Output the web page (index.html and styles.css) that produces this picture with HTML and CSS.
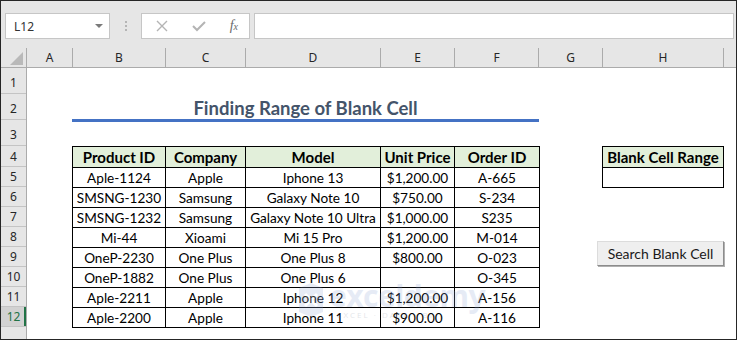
FILE: index.html
```html
<!DOCTYPE html>
<html lang="en">
<head>
    <meta charset="UTF-8">
    <meta name="viewport" content="width=device-width, initial-scale=1.0">
    <title>Finding Range of Blank Cell</title>
    <link rel="stylesheet" href="styles.css">
</head>
<body>
    <div class="window">
        <div class="formula-bar">
            <div class="name-box">
                <span>L12</span>
                <span class="arrow"></span>
            </div>
            <div class="grip">
                <i></i><i></i><i></i>
            </div>
            <div class="fx-box">
                <svg width="14" height="14" viewBox="0 0 14 14"><path d="M2 2 L12 12 M12 2 L2 12" stroke="#b4b4b4" stroke-width="1.4" fill="none"/></svg>
                <svg width="16" height="14" viewBox="0 0 16 14"><path d="M2 7 L6 11 L14 3" stroke="#b4b4b4" stroke-width="2" fill="none"/></svg>
                <span class="fx">f<small>x</small></span>
            </div>
            <div class="formula-input"></div>
        </div>

        <div class="col-heads">
            <div class="corner">
                <svg width="13" height="13" viewBox="0 0 13 13"><path d="M0 13 L13 13 L13 0 Z" fill="#b9b9b9"/></svg>
            </div>
            <div>A</div>
            <div>B</div>
            <div>C</div>
            <div>D</div>
            <div>E</div>
            <div>F</div>
            <div>G</div>
            <div>H</div>
            <div class="last"></div>
        </div>

        <div class="sheet">
            <div class="row-heads">
                <div class="tall">1</div>
                <div class="tall">2</div>
                <div class="tall">3</div>
                <div class="r4">4</div>
                <div>5</div>
                <div>6</div>
                <div>7</div>
                <div>8</div>
                <div>9</div>
                <div>10</div>
                <div>11</div>
                <div class="active">12</div>
                <div class="rest"></div>
            </div>

            <div class="cells">
                <div class="title">Finding Range of Blank Cell</div>

                <table class="data-table">
                    <colgroup>
                        <col style="width: 93px">
                        <col style="width: 80px">
                        <col style="width: 135px">
                        <col style="width: 74px">
                        <col style="width: 85px">
                    </colgroup>
                    <thead>
                        <tr>
                            <td>Product ID</td>
                            <td>Company</td>
                            <td>Model</td>
                            <td>Unit Price</td>
                            <td>Order ID</td>
                        </tr>
                    </thead>
                    <tbody>
                        <tr><td>Aple-1124</td><td>Apple</td><td>Iphone 13</td><td>$1,200.00</td><td>A-665</td></tr>
                        <tr><td>SMSNG-1230</td><td>Samsung</td><td>Galaxy Note 10</td><td>$750.00</td><td>S-234</td></tr>
                        <tr><td>SMSNG-1232</td><td>Samsung</td><td>Galaxy Note 10 Ultra</td><td>$1,000.00</td><td>S235</td></tr>
                        <tr><td>Mi-44</td><td>Xioami</td><td>Mi 15 Pro</td><td>$1,200.00</td><td>M-014</td></tr>
                        <tr><td>OneP-2230</td><td>One Plus</td><td>One Plus 8</td><td>$800.00</td><td>O-023</td></tr>
                        <tr><td>OneP-1882</td><td>One Plus</td><td>One Plus 6</td><td></td><td>O-345</td></tr>
                        <tr><td>Aple-2211</td><td>Apple</td><td>Iphone 12</td><td>$1,200.00</td><td>A-156</td></tr>
                        <tr><td>Aple-2200</td><td>Apple</td><td>Iphone 11</td><td>$900.00</td><td>A-116</td></tr>
                    </tbody>
                </table>

                <table class="range-table">
                    <thead>
                        <tr><td>Blank Cell Range</td></tr>
                    </thead>
                    <tbody>
                        <tr><td></td></tr>
                    </tbody>
                </table>

                <button class="search-btn">Search Blank Cell</button>
            </div>

            <div class="watermark">
                <svg width="28" height="34" viewBox="0 0 28 34"><path d="M2 5 L14 0 L26 5 L26 29 L14 34 L2 29 Z" fill="#8fa6d6"/><path d="M8 11 L20 23 M20 11 L8 23" stroke="#fff" stroke-width="3"/></svg>
                <div class="wm-text">
                    <span class="wm-name">exceldemy</span>
                    <span class="wm-sub">EXCEL · DATA · BI</span>
                </div>
            </div>
        </div>
    </div>
</body>
</html>
```

FILE: styles.css
```css
*{
    margin: 0;
    padding: 0;
    box-sizing: border-box;
}

body{
    background: #ffffff;
    font-family: Lato, "Liberation Sans", sans-serif;
}

.window{
    width: 737px;
    height: 340px;
    border: 1px solid #262626;
    display: flex;
    flex-direction: column;
    background: #ffffff;
    overflow: hidden;
}

/* formula bar */
.formula-bar{
    height: 47px;
    background: #e6e6e6;
    display: flex;
    align-items: flex-start;
    padding-top: 12px;
    padding-left: 4px;
}

.name-box{
    width: 105px;
    height: 26px;
    background: #ffffff;
    border: 1px solid #c6c6c6;
    display: flex;
    align-items: center;
    justify-content: space-between;
    padding: 0 6px 0 8px;
    font-family: "Noto Sans", sans-serif;
    font-size: 12px;
    color: #333333;
}

.name-box .arrow{
    width: 0;
    height: 0;
    border-left: 4px solid transparent;
    border-right: 4px solid transparent;
    border-top: 4px solid #7a7a7a;
}

.grip{
    width: 31px;
    height: 26px;
    display: flex;
    flex-direction: column;
    align-items: center;
    justify-content: center;
    gap: 2px;
}

.grip i{
    width: 2px;
    height: 2px;
    background: #b5b5b5;
}

.fx-box{
    width: 109px;
    height: 26px;
    background: #ffffff;
    border: 1px solid #c6c6c6;
    display: flex;
    align-items: center;
    justify-content: space-between;
    padding: 0 11px 0 13px;
}

.fx{
    font-family: "Liberation Serif", serif;
    font-style: italic;
    font-size: 14px;
    color: #6a6a6a;
}

.fx small{
    font-size: 10px;
}

.formula-input{
    flex: 1;
    height: 26px;
    margin-left: 4px;
    margin-right: 2px;
    background: #ffffff;
    border: 1px solid #c6c6c6;
}

/* column headers */
.col-heads{
    height: 20px;
    display: grid;
    grid-template-columns: 26px 46px 93px 80px 135px 74px 84px 64px 121px 1fr;
    background: #e6e6e6;
    border-bottom: 1px solid #ababab;
    font-family: "Noto Sans", sans-serif;
    font-size: 12px;
    color: #262626;
}

.col-heads div{
    border-right: 1px solid #ababab;
    display: flex;
    align-items: center;
    justify-content: center;
}

.col-heads .corner{
    align-items: flex-end;
    justify-content: flex-end;
    padding: 0 3px 2px 0;
}

.col-heads .last{
    border-right: none;
}

/* sheet body */
.sheet{
    flex: 1;
    display: flex;
    position: relative;
}

.row-heads{
    width: 26px;
    display: flex;
    flex-direction: column;
    background: #e6e6e6;
    border-right: 1px solid #ababab;
    font-family: "Noto Sans", sans-serif;
    font-size: 12px;
    color: #262626;
}

.row-heads div{
    height: 20px;
    border-bottom: 1px solid #c4c4c4;
    display: flex;
    align-items: center;
    justify-content: center;
}

.row-heads .tall{
    height: 26px;
    align-items: flex-end;
    padding-bottom: 2px;
}

.row-heads .r4{
    height: 21px;
}

.row-heads .active{
    background: #d2d2d2;
    color: #217346;
    box-shadow: inset -2px 0 0 #217346;
}

.row-heads .rest{
    flex: 1;
    border-bottom: none;
}

.cells{
    flex: 1;
    display: grid;
    grid-template-columns: 46px 93px 80px 135px 74px 84px 64px 121px 1fr;
    grid-template-rows: 26px 26px 26px 21px repeat(8, 20px) 1fr;
}

.title{
    grid-row: 2;
    grid-column: 2 / 7;
    margin-left: -1px;
    border-bottom: 3px solid #4472c4;
    margin-bottom: -2px;
    padding-top: 2px;
    text-align: center;
    font-size: 18.5px;
    font-weight: 700;
    color: #44546a;
    line-height: 24px;
}

.data-table{
    grid-row: 4 / 13;
    grid-column: 2 / 7;
    margin-left: -1px;
    border-collapse: collapse;
    table-layout: fixed;
    width: 467px;
    font-size: 13.6px;
    color: #000000;
}

.data-table td,
.range-table td{
    border: 1px solid #000000;
    text-align: center;
    height: 20px;
    padding: 0;
    white-space: nowrap;
    line-height: 18px;
}

.data-table thead td,
.range-table thead td{
    background: #e2efda;
    font-weight: 700;
    font-size: 15px;
    height: 21px;
}

.range-table{
    grid-row: 4 / 6;
    grid-column: 8;
    margin-left: -1px;
    border-collapse: collapse;
    width: 122px;
    font-size: 14px;
    align-self: start;
}

.search-btn{
    grid-row: 8 / 10;
    grid-column: 7 / 9;
    justify-self: end;
    align-self: end;
    width: 127px;
    height: 25px;
    margin-bottom: 1px;
    background: #efefef;
    border: 1px solid #dcdcdc;
    border-right-color: #8c8c8c;
    border-bottom-color: #8c8c8c;
    box-shadow: 1px 1px 0 #b0b0b0;
    font-family: Lato, "Liberation Sans", sans-serif;
    font-size: 14px;
    color: #1a1a1a;
}

/* faint site watermark over the table */
.watermark{
    position: absolute;
    left: 296px;
    top: 213px;
    display: flex;
    align-items: center;
    gap: 4px;
    opacity: 0.22;
    pointer-events: none;
}

.wm-text{
    display: flex;
    flex-direction: column;
    line-height: 1;
}

.wm-name{
    font-family: "Open Sans", sans-serif;
    font-size: 30px;
    font-weight: 700;
    color: #8fa6d6;
    letter-spacing: -0.5px;
}

.wm-sub{
    font-family: "Open Sans", sans-serif;
    font-size: 8px;
    color: #7f8a9c;
    letter-spacing: 2px;
    padding-left: 8px;
}
```
